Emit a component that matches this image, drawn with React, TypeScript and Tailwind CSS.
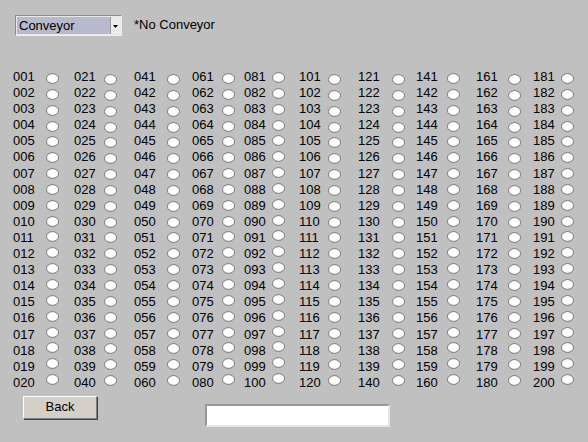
import React from "react";

const cols = [
  { w: "w-[61px]", lw: "w-[33px]", pt: "pt-[4px]" },
  { w: "w-[60px]", lw: "w-[30px]", pt: "pt-[5px]" },
  { w: "w-[58px]", lw: "w-[33px]", pt: "pt-[5px]" },
  { w: "w-[52px]", lw: "w-[30px]", pt: "pt-[4px]" },
  { w: "w-[55px]", lw: "w-[28px]", pt: "pt-[3px]" },
  { w: "w-[59px]", lw: "w-[29px]", pt: "pt-[5px]" },
  { w: "w-[58px]", lw: "w-[34px]", pt: "pt-[5px]" },
  { w: "w-[60px]", lw: "w-[31px]", pt: "pt-[4px]" },
  { w: "w-[57px]", lw: "w-[32px]", pt: "pt-[5px]" },
  { w: "w-[50px]", lw: "w-[28px]", pt: "pt-[4px]" },
];

function Radio() {
  return (
    <svg width="13" height="11" viewBox="0 0 13 11" className="block">
      <ellipse cx="6.5" cy="5.5" rx="6" ry="4.9" fill="#ffffff" stroke="#737373" strokeWidth="1" />
    </svg>
  );
}

export default function App() {
  return (
    <div
      className="w-[588px] h-[442px] bg-[#c0c0c0] text-black overflow-hidden"
      style={{ fontFamily: '"Liberation Sans", Arial, sans-serif' }}
    >
      <div className="flex items-center pt-[15px] pl-[15px]">
        <div className="flex w-[107px] h-[21px] border border-t-[#8a8a8a] border-l-[#8a8a8a] border-b-[#f0f0f0] border-r-[#f0f0f0] bg-[#e8e8e8] p-[1px]">
          <div className="flex-1 bg-[#b7bacb] text-[13px] leading-[17px] pl-[2px]">Conveyor</div>
          <div className="w-[10px] bg-[#ececec] border-l border-[#9a9a9a] flex items-center justify-center">
            <svg width="5" height="3" viewBox="0 0 5 3" className="block mt-[2px]">
              <path d="M0 0H5L2.5 3Z" fill="#000" />
            </svg>
          </div>
        </div>
        <div className="ml-[12px] text-[13px] leading-[16px] mt-[-2px]">*No Conveyor</div>
      </div>

      <div className="flex pl-[13px] mt-[33px]">
        {cols.map((c, ci) => (
          <div key={ci} className={`flex shrink-0 ${c.w}`}>
            <div className={`shrink-0 ${c.lw}`}>
              {Array.from({ length: 20 }, (_, ri) => (
                <div key={ri} className="h-[16.1px] text-[13px] leading-[16px] whitespace-nowrap">
                  {String(ci * 20 + ri + 1).padStart(3, "0")}
                </div>
              ))}
            </div>
            <div className={c.pt}>
              {Array.from({ length: 20 }, (_, ri) => (
                <div key={ri} className="h-[15.85px]">
                  <Radio />
                </div>
              ))}
            </div>
          </div>
        ))}
      </div>

      <div className="flex items-start">
        <button className="ml-[23px] mt-[5px] w-[74px] h-[23px] bg-[#d4d0c8] border border-t-white border-l-white border-b-[#808080] border-r-[#808080] shadow-[1px_1px_0_#404040] text-[13px] leading-[20px] text-center">
          Back
        </button>
        <div className="ml-[108px] mt-[13px] w-[185px] h-[23px] bg-white border-2 border-t-[#9a9a9a] border-l-[#9a9a9a] border-b-[#e6e6e6] border-r-[#e6e6e6]" />
      </div>
    </div>
  );
}
